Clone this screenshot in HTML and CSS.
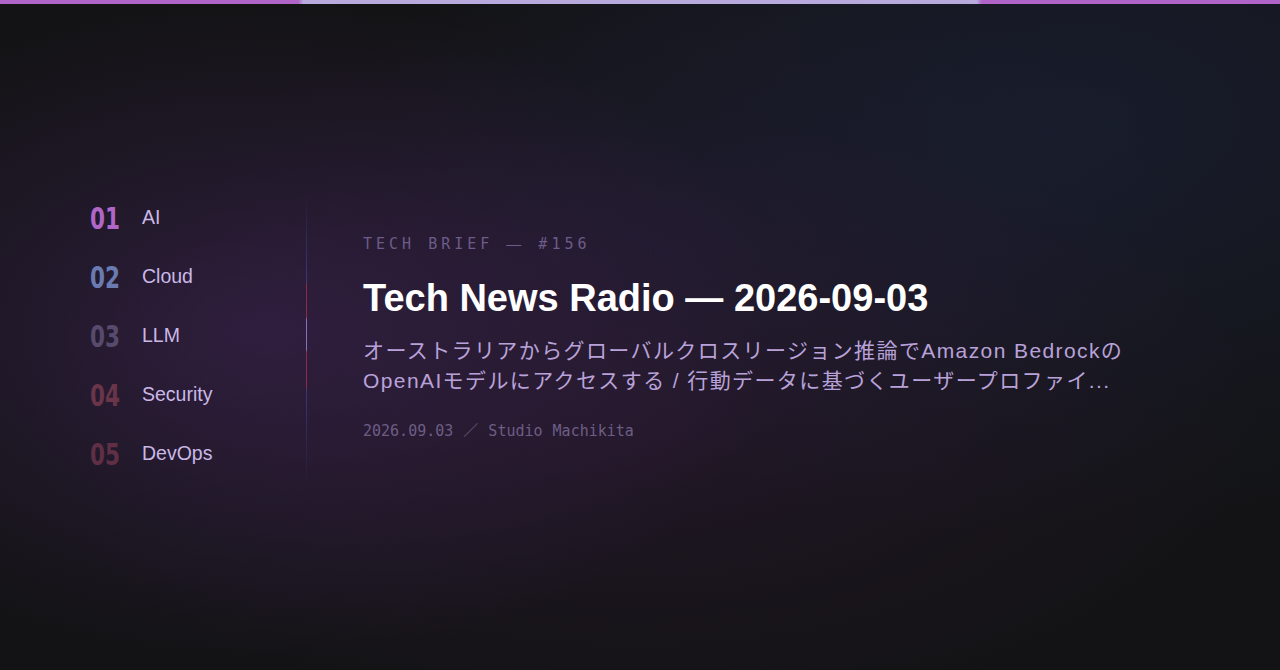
FILE: index.html
```html
<!DOCTYPE html>
<html lang="ja">
<head>
<meta charset="utf-8">
<title>Tech News Radio</title>
<link rel="stylesheet" href="styles.css">
</head>
<body>
<div class="topbar"></div>
<main class="stage">
  <nav class="topics">
    <ul class="topic-list">
      <li class="topic t1"><span class="num">01</span><span class="label">AI</span></li>
      <li class="topic t2"><span class="num">02</span><span class="label">Cloud</span></li>
      <li class="topic t3"><span class="num">03</span><span class="label">LLM</span></li>
      <li class="topic t4"><span class="num">04</span><span class="label">Security</span></li>
      <li class="topic t5"><span class="num">05</span><span class="label">DevOps</span></li>
    </ul>
    <div class="divider"></div>
  </nav>
  <section class="episode">
    <p class="tag">TECH BRIEF <span class="dash">—</span> #156</p>
    <h1 class="title">Tech News Radio — 2026-09-03</h1>
    <p class="summary">オーストラリアからグローバルクロスリージョン推論でAmazon Bedrockの OpenAIモデルにアクセスする / 行動データに基づくユーザープロファイ...</p>
    <p class="meta">2026.09.03 ／ Studio Machikita</p>
  </section>
</main>
</body>
</html>
```

FILE: styles.css
```css
html, body {
  margin: 0;
  padding: 0;
}
body {
  width: 1280px;
  height: 670px;
  overflow: hidden;
  background-color: #131315;
  background-image:
    radial-gradient(ellipse 520px 330px at 260px 330px, rgba(62, 36, 84, 0.62), rgba(62, 36, 84, 0) 100%),
    radial-gradient(ellipse 620px 300px at 640px 420px, rgba(52, 28, 60, 0.45), rgba(52, 28, 60, 0) 100%),
    radial-gradient(ellipse 700px 420px at 1080px 120px, rgba(28, 36, 62, 0.55), rgba(28, 36, 62, 0) 100%),
    radial-gradient(ellipse 500px 260px at 700px 230px, rgba(40, 30, 60, 0.4), rgba(40, 30, 60, 0) 100%);
  font-family: "Liberation Sans", "Noto Sans CJK JP", sans-serif;
  display: flex;
  flex-direction: column;
}
.topbar {
  height: 4px;
  flex: none;
  background: linear-gradient(90deg, #b064c8 0, #b064c8 23.3%, #b8aadc 23.7%, #b8aadc 76.3%, #b064c8 76.7%, #b064c8 100%);
}
.stage {
  flex: 1;
  display: flex;
  align-items: center;
  padding-left: 90px;
  padding-bottom: 4px;
}
.topics {
  display: flex;
  align-items: stretch;
  width: 217px;
  flex: none;
}
.topic-list {
  list-style: none;
  margin: 0;
  padding: 0;
  flex: 1;
}
.topic {
  height: 59px;
  display: flex;
  align-items: center;
}
.num {
  width: 52px;
  flex: none;
  display: inline-block;
  font-family: "DejaVu Sans Condensed", "DejaVu Sans", sans-serif;
  font-weight: 700;
  font-size: 30px;
  line-height: 1;
  padding-top: 4px;
  transform: scaleX(0.8);
  transform-origin: 0 50%;
}
.label {
  font-size: 19.5px;
  color: #c9b8e6;
}
.t1 .num { color: #b066c8; }
.t2 .num { color: #6a7bb2; }
.t3 .num { color: #574a6c; }
.t4 .num { color: #6a3449; }
.t5 .num { color: #5e2f45; }
.divider {
  width: 1px;
  flex: none;
  margin-top: 5px;
  margin-bottom: -5px;
  background: linear-gradient(180deg,
    rgba(50, 52, 110, 0) 0%,
    rgba(50, 52, 110, 0.6) 15%,
    #353a80 30%,
    #8a2c48 31%,
    #8a2c48 42%,
    #8472bd 43%,
    #8472bd 53%,
    #8a2c48 54%,
    #8a2c48 66%,
    #353a80 67%,
    rgba(50, 52, 110, 0.6) 82%,
    rgba(50, 52, 110, 0) 100%);
}
.episode {
  padding-left: 56px;
  padding-top: 4px;
}
.tag {
  margin: 0;
  font-family: "DejaVu Sans Mono", monospace;
  font-size: 15px;
  letter-spacing: 4px;
  color: #6d5b8a;
  line-height: 20px;
}
.dash {
  font-family: "Liberation Sans", sans-serif;
}
.title {
  margin: 22px 0 0;
  font-size: 38px;
  font-weight: 700;
  color: #ffffff;
  line-height: 44px;
  letter-spacing: 0;
}
.summary {
  margin: 16px 0 0;
  width: 790px;
  font-size: 21px;
  line-height: 30px;
  letter-spacing: 1.4px;
  color: #b9a2d9;
}
.meta {
  margin: 25px 0 0;
  font-family: "DejaVu Sans Mono", "Noto Sans CJK JP", monospace;
  font-size: 15px;
  line-height: 20px;
  color: #6d5e86;
  word-spacing: 1px;
}
```
